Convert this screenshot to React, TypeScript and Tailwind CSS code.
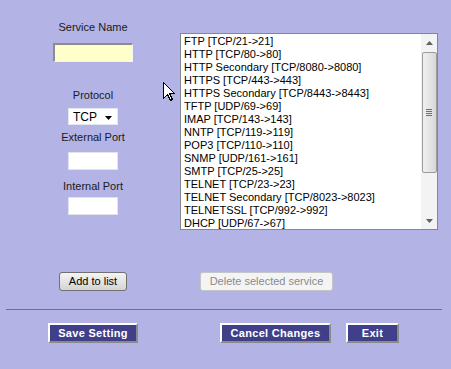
import React from "react";

const services = [
  "FTP [TCP/21->21]",
  "HTTP [TCP/80->80]",
  "HTTP Secondary [TCP/8080->8080]",
  "HTTPS [TCP/443->443]",
  "HTTPS Secondary [TCP/8443->8443]",
  "TFTP [UDP/69->69]",
  "IMAP [TCP/143->143]",
  "NNTP [TCP/119->119]",
  "POP3 [TCP/110->110]",
  "SNMP [UDP/161->161]",
  "SMTP [TCP/25->25]",
  "TELNET [TCP/23->23]",
  "TELNET Secondary [TCP/8023->8023]",
  "TELNETSSL [TCP/992->992]",
  "DHCP [UDP/67->67]",
];

function Label({ children, className = "" }: { children: React.ReactNode; className?: string }) {
  return <div className={`text-[11px] leading-[14px] text-[#1a1a1a] ${className}`}>{children}</div>;
}

function BlueButton({ children, className = "" }: { children: React.ReactNode; className?: string }) {
  return (
    <div
      className={`h-[20px] flex items-center justify-center bg-[#40408a] text-white font-bold text-[11px] tracking-[0.3px] border-t-2 border-l-2 border-t-white border-l-white border-r-2 border-b-2 border-r-[#8a8a8a] border-b-[#8a8a8a] ${className}`}
    >
      {children}
    </div>
  );
}

export default function App() {
  return (
    <div
      className="relative w-[451px] h-[369px] bg-[#b3b3e5] overflow-hidden flex flex-col"
      style={{ fontFamily: '"Liberation Sans", Arial, sans-serif' }}
    >
      <div className="flex pl-[6px]">
        <div className="w-[174px] flex flex-col items-center pt-[20px]">
          <Label>Service Name</Label>
          <div className="mt-[9px] w-[80px] h-[19px] bg-[#ffffcc] border-t-2 border-l-2 border-t-[#8c8c8c] border-l-[#8c8c8c] border-r border-b border-r-[#f4f4f4] border-b-[#f4f4f4]" />
          <Label className="mt-[26px]">Protocol</Label>
          <div className="mt-[6px] w-[50px] h-[17px] bg-white border border-[#e6e6ee] flex items-center pl-[4px] relative">
            <span className="text-[12px] leading-[14px] text-black">TCP</span>
            <svg className="absolute left-[36px] top-[7px]" width="8" height="4" viewBox="0 0 8 4">
              <polygon points="0,0 7,0 3.5,4" fill="#000" />
            </svg>
          </div>
          <Label className="mt-[5px]">External Port</Label>
          <div className="mt-[8px] w-[50px] h-[18px] bg-white border border-[#e2e2ea]" />
          <Label className="mt-[9px]">Internal Port</Label>
          <div className="mt-[4px] w-[50px] h-[18px] bg-white border border-[#e2e2ea]" />
        </div>

        <div className="mt-[33px] w-[258px] h-[197px] bg-white border border-[#828790] flex overflow-hidden">
          <div className="flex-1 pl-[3px] pt-[1px]">
            {services.map((s) => (
              <div key={s} className="text-[11px] leading-[13px] h-[13px] text-black whitespace-nowrap">
                {s}
              </div>
            ))}
          </div>
          <div className="w-[16px] h-full bg-[#f3f3f3] flex flex-col items-center">
            <div className="h-[18px] w-full flex items-center justify-center">
              <svg width="7" height="4" viewBox="0 0 7 4">
                <polygon points="3.5,0 7,4 0,4" fill="#606060" />
              </svg>
            </div>
            <div className="w-[15px] h-[121px] rounded-[2px] border border-[#9c9c9c] bg-gradient-to-r from-[#f0f0f0] to-[#d8d8d8] flex flex-col items-center justify-center gap-[1px]">
              <div className="w-[6px] h-[1px] bg-[#707070]" />
              <div className="w-[6px] h-[1px] bg-[#707070]" />
              <div className="w-[6px] h-[1px] bg-[#707070]" />
              <div className="w-[6px] h-[1px] bg-[#707070]" />
            </div>
            <div className="flex-1" />
            <div className="h-[16px] w-full flex items-center justify-center">
              <svg width="7" height="4" viewBox="0 0 7 4">
                <polygon points="0,0 7,0 3.5,4" fill="#606060" />
              </svg>
            </div>
          </div>
        </div>
      </div>

      <div className="flex mt-[42px] pl-[59px]">
        <div className="w-[68px] h-[19px] rounded-[3px] border border-[#707070] bg-gradient-to-b from-[#f4f4f4] to-[#d4d4d4] flex items-center justify-center text-[11px] text-black">
          Add to list
        </div>
        <div className="ml-[73px] w-[133px] h-[19px] rounded-[3px] border border-[#c4c6c8] bg-[#f4f4f4] flex items-center justify-center text-[11px] text-[#8a8a8a]">
          Delete selected service
        </div>
      </div>

      <div className="mt-[18px] ml-[6px] w-[436px] h-[1px] bg-[#6666cc]" />

      <div className="flex mt-[13px] pl-[48px]">
        <BlueButton className="w-[90px]">Save Setting</BlueButton>
        <BlueButton className="ml-[82px] w-[111px]">Cancel Changes</BlueButton>
        <BlueButton className="ml-[15px] w-[53px]">Exit</BlueButton>
      </div>

      <svg className="absolute left-[163px] top-[82px]" width="13" height="20" viewBox="0 0 13 20" shapeRendering="crispEdges">
        <polygon points="0.5,0.5 0.5,16.5 4.5,12.5 7.5,18.5 9.5,17.5 6.5,11.5 11.5,11.5" fill="#fff" stroke="#000" strokeWidth="1" />
      </svg>
    </div>
  );
}
